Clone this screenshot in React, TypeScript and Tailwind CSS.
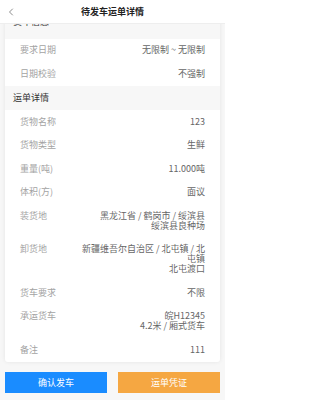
import { ChevronLeft } from 'lucide-react';

type Row = { label: string; value: string[] };

const topRows: Row[] = [
  { label: '要求日期', value: ['无限制 ~ 无限制'] },
  { label: '日期校验', value: ['不强制'] },
];

const detailRows: Row[] = [
  { label: '货物名称', value: ['123'] },
  { label: '货物类型', value: ['生鲜'] },
  { label: '重量(吨)', value: ['11.000吨'] },
  { label: '体积(方)', value: ['面议'] },
  { label: '装货地', value: ['黑龙江省 / 鹤岗市 / 绥滨县', '绥滨县良种场'] },
  { label: '卸货地', value: ['新疆维吾尔自治区 / 北屯镇 / 北', '屯镇', '北屯渡口'] },
  { label: '货车要求', value: ['不限'] },
  { label: '承运货车', value: ['皖H12345', '4.2米 / 厢式货车'] },
  { label: '备注', value: ['111'] },
];

const InfoRow = ({ row }: { row: Row }) => (
  <div className="flex items-start justify-between px-[15px] py-[6.75px] leading-[10px]">
    <span className="text-[#a3a3a3] shrink-0">{row.label}</span>
    <div className="text-right text-[#666] whitespace-nowrap">
      {row.value.map((line, i) => (
        <div key={i}>{line}</div>
      ))}
    </div>
  </div>
);

export default function App() {
  return (
    <div
      className="w-[225px] h-[400px] flex flex-col bg-[#f7f7f7] text-[9px] overflow-hidden"
      style={{ fontFamily: '"Noto Sans CJK SC", "Noto Sans", sans-serif' }}
    >
      {/* Nav bar */}
      <div className="h-[24px] shrink-0 bg-white flex items-center relative border-b border-[#eee]">
        <ChevronLeft className="w-[12px] h-[12px] text-[#666] ml-[5px]" strokeWidth={1.5} />
        <div className="absolute inset-0 flex items-center justify-center font-bold text-[#222]">
          待发车运单详情
        </div>
      </div>

      {/* Scrolled content: the card's first section title sits under the nav bar */}
      <div className="flex-1 overflow-hidden px-[5px] pt-[2px]">
        <div className="mt-[-12px] bg-white rounded-[3px] shadow-[0_0_4px_rgba(0,0,0,0.08)]">
          <div className="h-[24.5px] flex items-start pt-[3px] px-[8px] bg-[#f7f7f7] text-[#333] leading-[10px]">
            货车信息
          </div>
          {topRows.map((r) => (
            <InfoRow key={r.label} row={r} />
          ))}
          <div className="h-[24.5px] flex items-center px-[8px] bg-[#f7f7f7] text-[#333]">运单详情</div>
          {detailRows.map((r) => (
            <InfoRow key={r.label} row={r} />
          ))}
        </div>
      </div>

      {/* Bottom actions */}
      <div className="shrink-0 flex gap-[11px] px-[5px] pt-[4px] pb-[7px]">
        <button className="flex-1 h-[21px] bg-[#1a8cff] text-white text-[9px]">确认发车</button>
        <button className="flex-1 h-[21px] bg-[#f5a742] text-white text-[9px]">运单凭证</button>
      </div>
    </div>
  );
}
